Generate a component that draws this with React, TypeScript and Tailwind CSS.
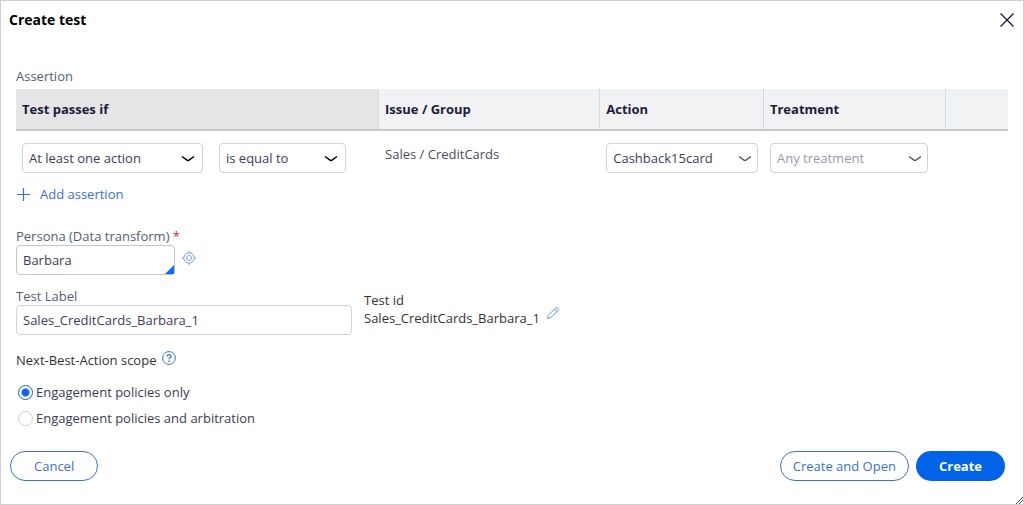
import { useState } from 'react'
import type { ReactNode } from 'react'
import clsx from 'clsx'

interface SelectFieldProps {
  label: string
  options: string[]
  className?: string
  variant?: 'solid' | 'light'
  muted?: boolean
}

function SelectField({ label, options, className, variant = 'solid', muted = false }: SelectFieldProps) {
  return (
    <div className={clsx('relative', className)}>
      <select
        aria-label={label}
        className={clsx(
          'block h-[30px] w-full appearance-none rounded border border-[#cfd3dc] bg-white pl-1.5 pr-8',
          muted ? 'text-[#9a9aaa]' : 'text-[#3c3c55]',
        )}
      >
        {options.map((option) => (
          <option key={option}>{option}</option>
        ))}
      </select>
      <svg
        viewBox="0 0 14 8"
        className={clsx(
          'pointer-events-none absolute top-3 h-2 w-3.5',
          variant === 'solid' ? 'right-2 text-black' : 'right-1.5 text-[#555]',
        )}
        fill="none"
        stroke="currentColor"
        strokeWidth={variant === 'solid' ? 1.5 : 1.3}
      >
        <path d="M1 1.5 6 5.1Q7 5.8 8 5.1L13 1.5" />
      </svg>
    </div>
  )
}

function HeadCell({ children, className }: { children?: ReactNode; className?: string }) {
  return (
    <th className={clsx('h-[42px] border-b-2 border-b-[#c9c9c9] px-1.5 text-left font-bold text-[#1c1c3a]', className)}>
      {children}
    </th>
  )
}

const scopes = ['Engagement policies only', 'Engagement policies and arbitration']

export default function App() {
  const [scope, setScope] = useState(scopes[0])
  const [persona, setPersona] = useState('Barbara')
  const [label, setLabel] = useState('Sales_CreditCards_Barbara_1')

  return (
    <div
      role="dialog"
      aria-labelledby="dialog-title"
      className="relative min-h-screen border border-[#d0d0d0] bg-white font-['Open_Sans',sans-serif] text-[13px] leading-[18px] text-[#3c3c55]"
    >
      {/* Title bar */}
      <header className="flex h-[38px] items-center justify-between px-2">
        <h1 id="dialog-title" className="text-sm font-bold text-black">
          Create test
        </h1>
        <button type="button" aria-label="Close" className="text-[#1c1c3a]">
          <svg viewBox="0 0 16 16" className="h-4 w-4" fill="none" stroke="currentColor" strokeWidth="1.3">
            <path d="M1.5 1.5 14.5 14.5M14.5 1.5 1.5 14.5" />
          </svg>
        </button>
      </header>

      <main className="px-[15px] pt-7">
        {/* Assertions */}
        <h2 className="mb-1 text-[#4f6078]">Assertion</h2>
        <table className="w-full table-fixed border-separate border-spacing-0">
          <colgroup>
            <col className="w-[36.6%]" />
            <col className="w-[22.3%]" />
            <col className="w-[16.5%]" />
            <col className="w-[18.4%]" />
            <col />
          </colgroup>
          <thead>
            <tr>
              <HeadCell className="border-r border-r-[#d5d8de] bg-[#e5e5e5]">Test passes if</HeadCell>
              <HeadCell className="border-r border-r-[#d5d8de] bg-[#f1f2f4]">Issue / Group</HeadCell>
              <HeadCell className="border-r border-r-[#d5d8de] bg-[#f1f2f4]">Action</HeadCell>
              <HeadCell className="border-r border-r-[#d5d8de] bg-[#f1f2f4]">Treatment</HeadCell>
              <HeadCell className="bg-[#f1f2f4]" />
            </tr>
          </thead>
          <tbody>
            <tr className="align-top">
              <td className="px-1.5 pt-3">
                <div className="flex gap-4">
                  <SelectField
                    label="Quantifier"
                    options={['At least one action', 'All actions', 'No action']}
                    className="w-[181px]"
                  />
                  <SelectField label="Comparator" options={['is equal to', 'is not equal to']} className="w-[127px]" />
                </div>
              </td>
              <td className="px-1.5 pt-3.5 text-[#4a4a62]">Sales / CreditCards</td>
              <td className="px-1.5 pt-3">
                <SelectField label="Action" options={['Cashback15card']} variant="light" />
              </td>
              <td className="px-1.5 pt-3">
                <SelectField
                  label="Treatment"
                  options={['Any treatment']}
                  className="w-[158px]"
                  variant="light"
                  muted
                />
              </td>
              <td />
            </tr>
          </tbody>
        </table>
        <button type="button" className="mt-3 flex items-center gap-2.5 text-[#3b6ee0]">
          <svg viewBox="0 0 14 14" className="h-3.5 w-3.5" fill="none" stroke="currentColor" strokeWidth="1.2">
            <path d="M7.5 1v13M1 7.5h13" />
          </svg>
          Add assertion
        </button>

        {/* Persona */}
        <div className="mt-6">
          <label htmlFor="persona" className="block text-[#4f6078]">
            Persona (Data transform) <span className="text-[#e0222c]">*</span>
          </label>
          <div className="flex items-start gap-[7px]">
            <div className="relative w-[159px]">
              <input
                id="persona"
                value={persona}
                onChange={(e) => setPersona(e.target.value)}
                className="block h-[30px] w-full rounded border border-[#c2c5cc] px-1.5"
              />
              <svg viewBox="0 0 9 9" className="absolute bottom-px right-px h-[9px] w-[9px]">
                <path d="M9 0v9H0z" fill="#0a6cf5" />
              </svg>
            </div>
            <button type="button" aria-label="Open persona" className="mt-1.5 text-[#7c9ff0]">
              <svg viewBox="0 0 14 14" className="h-3.5 w-3.5" fill="none" stroke="currentColor" strokeWidth="1">
                <circle cx="7" cy="7" r="5.2" />
                <circle cx="7" cy="7" r="2.5" />
                <path d="M7 0v2M7 12v2M0 7h2M12 7h2" />
              </svg>
            </button>
          </div>
        </div>

        {/* Label and id */}
        <div className="mt-3 flex items-start gap-3">
          <div className="w-[336px]">
            <label htmlFor="test-label" className="block text-[#4f6078]">
              Test Label
            </label>
            <input
              id="test-label"
              value={label}
              onChange={(e) => setLabel(e.target.value)}
              className="block h-[30px] w-full rounded border border-[#cfd3dc] px-1.5"
            />
          </div>
          <div className="flex items-center gap-1.5 pt-1 text-[#333]">
            <div>
              <div>Test id</div>
              <div>{label}</div>
            </div>
            <button type="button" aria-label="Edit test id" className="pt-2 text-[#6a93f0]">
              <svg viewBox="0 0 14 14" className="h-3.5 w-3.5" fill="none" stroke="currentColor" strokeWidth="1">
                <path d="M1.5 12.5 2.4 9.2 9.8 1.8a1.2 1.2 0 0 1 1.7 0l.8.8a1.2 1.2 0 0 1 0 1.7L4.8 11.6zM8.6 3l2.5 2.5" />
              </svg>
            </button>
          </div>
        </div>

        {/* Scope */}
        <fieldset className="mt-4">
          <legend className="flex gap-1.5 text-[#333]">
            Next-Best-Action scope
            <button type="button" aria-label="Help" className="self-start text-[#3b6ee0]">
              <svg viewBox="0 0 14 14" className="h-3.5 w-3.5" fill="none" stroke="currentColor" strokeWidth="1">
                <circle cx="7" cy="7" r="6.4" />
                <path d="M5.1 5.5c0-2.5 3.8-2.4 3.8-.2 0 1.4-1.9 1.4-1.9 3M7 9.6v1.4" strokeWidth="1.4" />
              </svg>
            </button>
          </legend>
          <div className="mt-3.5 flex flex-col gap-2">
            {scopes.map((item) => (
              <label key={item} className="flex items-center gap-[3px] pl-0.5">
                <input
                  type="radio"
                  name="scope"
                  checked={scope === item}
                  onChange={() => setScope(item)}
                  className="h-[15px] w-[15px] appearance-none rounded-full border border-[#d0cfda] bg-white checked:border-[#0a63e9] checked:bg-[radial-gradient(circle,#0a63e9_3px,#fff_5px)]"
                />
                {item}
              </label>
            ))}
          </div>
        </fieldset>
      </main>

      {/* Actions */}
      <footer className="flex items-center gap-[7px] pb-5 pl-[9px] pr-[18px] pt-6">
        <button type="button" className="mr-auto h-[30px] rounded-full border border-[#3b6ee0] px-[23px] text-[#3b6ee0]">
          Cancel
        </button>
        <button type="button" className="h-[30px] rounded-full border border-[#3b6ee0] px-3 text-[#3b6ee0]">
          Create and Open
        </button>
        <button type="button" className="h-[30px] rounded-full bg-[#0063e8] px-[23px] font-bold text-white">
          Create
        </button>
      </footer>

      {/* Resize grip */}
      <svg viewBox="0 0 8 8" className="absolute bottom-0 right-0 h-2 w-2" stroke="#444" strokeWidth="1">
        <path d="M1 8 8 1M4 8 8 4" />
      </svg>
    </div>
  )
}
